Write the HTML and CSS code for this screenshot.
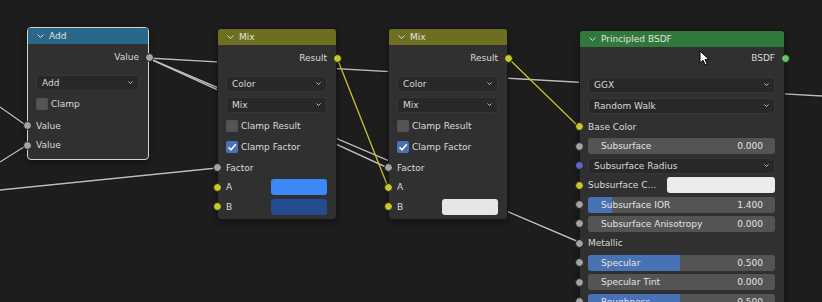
FILE: index.html
```html
<!DOCTYPE html>
<html lang="en">
<head>
  <meta charset="UTF-8">
  <title>Shader Editor</title>
  <link rel="stylesheet" href="styles.css">
</head>
<body>
  <div class="editor">

    <!-- noodles: drawn under the nodes -->
    <svg class="wires" width="822" height="302" viewBox="0 0 822 302">
      <defs>
        <path id="w1" d="M0 107 L27 126"/>
        <path id="w2" d="M0 162 L27 145"/>
        <path id="w3" d="M0 190 L217 168"/>
        <path id="w4" d="M148 58 L822 96"/>
        <path id="w5" d="M148 58 L579 242"/>
        <path id="w6" d="M148 58 L388 168"/>
        <path id="w7" d="M337 58 L388 187"/>
        <path id="w8" d="M508 58 L579 127"/>
      </defs>
      <g class="wire-shade">
        <use href="#w1"/><use href="#w2"/><use href="#w3"/><use href="#w4"/>
        <use href="#w5"/><use href="#w6"/><use href="#w7"/><use href="#w8"/>
      </g>
      <g class="wire-gray">
        <use href="#w1"/><use href="#w2"/><use href="#w3"/><use href="#w4"/>
        <use href="#w5"/><use href="#w6"/>
      </g>
      <g class="wire-yellow">
        <use href="#w7"/><use href="#w8"/>
      </g>
    </svg>

    <!-- Add (math) -->
    <div class="node node-add selected">
      <div class="node-header head-math">
        <svg class="chev" viewBox="0 0 7 4"><path d="M0.5 0.5 L3.5 3.5 L6.5 0.5"/></svg>
        <span>Add</span>
      </div>
      <div class="node-body body-add">
        <div class="row row-out"><span>Value</span><i class="socket gray"></i></div>
        <div class="row row-prop">
          <div class="menu"><span>Add</span><svg class="menu-chev" viewBox="0 0 5 3"><path d="M0.5 0.5 L2.5 2.5 L4.5 0.5"/></svg></div>
        </div>
        <div class="row row-prop"><span class="check"></span><span>Clamp</span></div>
        <div class="row row-sock sock-first"><i class="socket gray"></i><span>Value</span></div>
        <div class="row row-sock"><i class="socket gray"></i><span>Value</span></div>
      </div>
    </div>

    <!-- Mix 1 -->
    <div class="node node-mix1">
      <div class="node-header head-color">
        <svg class="chev" viewBox="0 0 7 4"><path d="M0.5 0.5 L3.5 3.5 L6.5 0.5"/></svg>
        <span>Mix</span>
      </div>
      <div class="node-body body-mix">
        <div class="row row-out"><span>Result</span><i class="socket yellow"></i></div>
        <div class="row row-prop">
          <div class="menu"><span>Color</span><svg class="menu-chev" viewBox="0 0 5 3"><path d="M0.5 0.5 L2.5 2.5 L4.5 0.5"/></svg></div>
        </div>
        <div class="row row-prop">
          <div class="menu"><span>Mix</span><svg class="menu-chev" viewBox="0 0 5 3"><path d="M0.5 0.5 L2.5 2.5 L4.5 0.5"/></svg></div>
        </div>
        <div class="row row-prop"><span class="check"></span><span>Clamp Result</span></div>
        <div class="row row-prop">
          <span class="check on"><svg viewBox="0 0 12 12"><path d="M2.5 6.3 L5 8.8 L9.8 3.2"/></svg></span><span>Clamp Factor</span>
        </div>
        <div class="row row-sock sock-first"><i class="socket gray"></i><span>Factor</span></div>
        <div class="row row-sock"><i class="socket yellow"></i><span>A</span><span class="swatch swatch-mix" style="background:#3b89f7"></span></div>
        <div class="row row-sock"><i class="socket yellow"></i><span>B</span><span class="swatch swatch-mix" style="background:#234d90"></span></div>
      </div>
    </div>

    <!-- Mix 2 -->
    <div class="node node-mix2">
      <div class="node-header head-color">
        <svg class="chev" viewBox="0 0 7 4"><path d="M0.5 0.5 L3.5 3.5 L6.5 0.5"/></svg>
        <span>Mix</span>
      </div>
      <div class="node-body body-mix">
        <div class="row row-out"><span>Result</span><i class="socket yellow"></i></div>
        <div class="row row-prop">
          <div class="menu"><span>Color</span><svg class="menu-chev" viewBox="0 0 5 3"><path d="M0.5 0.5 L2.5 2.5 L4.5 0.5"/></svg></div>
        </div>
        <div class="row row-prop">
          <div class="menu"><span>Mix</span><svg class="menu-chev" viewBox="0 0 5 3"><path d="M0.5 0.5 L2.5 2.5 L4.5 0.5"/></svg></div>
        </div>
        <div class="row row-prop"><span class="check"></span><span>Clamp Result</span></div>
        <div class="row row-prop">
          <span class="check on"><svg viewBox="0 0 12 12"><path d="M2.5 6.3 L5 8.8 L9.8 3.2"/></svg></span><span>Clamp Factor</span>
        </div>
        <div class="row row-sock sock-first"><i class="socket gray"></i><span>Factor</span></div>
        <div class="row row-sock"><i class="socket yellow"></i><span>A</span></div>
        <div class="row row-sock"><i class="socket yellow"></i><span>B</span><span class="swatch swatch-mix" style="background:#e6e6e6"></span></div>
      </div>
    </div>

    <!-- Principled BSDF -->
    <div class="node node-bsdf">
      <div class="node-header head-shader">
        <svg class="chev" viewBox="0 0 7 4"><path d="M0.5 0.5 L3.5 3.5 L6.5 0.5"/></svg>
        <span>Principled BSDF</span>
      </div>
      <div class="node-body body-bsdf">
        <div class="row row-out"><span>BSDF</span><i class="socket green"></i></div>
        <div class="row row-prop">
          <div class="menu"><span>GGX</span><svg class="menu-chev" viewBox="0 0 5 3"><path d="M0.5 0.5 L2.5 2.5 L4.5 0.5"/></svg></div>
        </div>
        <div class="row row-prop">
          <div class="menu"><span>Random Walk</span><svg class="menu-chev" viewBox="0 0 5 3"><path d="M0.5 0.5 L2.5 2.5 L4.5 0.5"/></svg></div>
        </div>
        <div class="row row-bsdf sock-first"><i class="socket yellow"></i><span>Base Color</span></div>
        <div class="row row-bsdf"><i class="socket gray"></i>
          <div class="slider"><span>Subsurface</span><span>0.000</span></div>
        </div>
        <div class="row row-bsdf"><i class="socket purple"></i>
          <div class="menu"><span>Subsurface Radius</span><svg class="menu-chev" viewBox="0 0 5 3"><path d="M0.5 0.5 L2.5 2.5 L4.5 0.5"/></svg></div>
        </div>
        <div class="row row-bsdf"><i class="socket yellow"></i><span>Subsurface C...</span><span class="swatch swatch-bsdf" style="background:#ececec"></span></div>
        <div class="row row-bsdf"><i class="socket gray"></i>
          <div class="slider" style="--fill:13%"><span>Subsurface IOR</span><span>1.400</span></div>
        </div>
        <div class="row row-bsdf"><i class="socket gray"></i>
          <div class="slider"><span>Subsurface Anisotropy</span><span>0.000</span></div>
        </div>
        <div class="row row-bsdf"><i class="socket gray"></i><span>Metallic</span></div>
        <div class="row row-bsdf"><i class="socket gray"></i>
          <div class="slider" style="--fill:49%"><span>Specular</span><span>0.500</span></div>
        </div>
        <div class="row row-bsdf"><i class="socket gray"></i>
          <div class="slider"><span>Specular Tint</span><span>0.000</span></div>
        </div>
        <div class="row row-bsdf"><i class="socket gray"></i>
          <div class="slider" style="--fill:49%"><span>Roughness</span><span>0.500</span></div>
        </div>
      </div>
    </div>

    <!-- mouse pointer -->
    <svg class="pointer" width="12" height="17" viewBox="0 0 12 17">
      <path d="M1 1 L1 13 L4 10.2 L6.2 15 L8.2 14.1 L6 9.4 L10 9.4 Z"/>
    </svg>
  </div>
</body>
</html>
```

FILE: styles.css
```css
* {
  box-sizing: border-box;
}

body {
  margin: 0;
  background: #1d1d1d;
  font-family: "DejaVu Sans", sans-serif;
  font-size: 9px;
  color: #dadada;
}

.editor {
  position: relative;
  width: 822px;
  height: 302px;
  overflow: hidden;
  background: #1d1d1d;
}

/* noodles */
.wires {
  position: absolute;
  left: 0;
  top: 0;
}
.wires use {
  fill: none;
}
.wire-shade {
  stroke: #0e0e0e;
  stroke-width: 3;
  stroke-opacity: 0.55;
  fill: none;
}
.wire-gray {
  stroke: #bdbdbd;
  stroke-width: 1.4;
  fill: none;
}
.wire-yellow {
  stroke: #c2c22c;
  stroke-width: 1.4;
  fill: none;
}

/* nodes sit on a free canvas */
.node {
  position: absolute;
  background: #303030;
  border: 1px solid #161616;
  border-radius: 4px;
  box-shadow: 0 2px 6px rgba(0, 0, 0, 0.45);
}
.node.selected {
  border-color: #d4d4d4;
}
.node-add {
  left: 27px;
  top: 27px;
  width: 122px;
}
.node-mix1 {
  left: 217px;
  top: 28px;
  width: 120px;
}
.node-mix2 {
  left: 388px;
  top: 28px;
  width: 120px;
}
.node-bsdf {
  left: 579px;
  top: 30px;
  width: 206px;
}

.node-header {
  height: 16px;
  display: flex;
  align-items: center;
  gap: 5px;
  padding-left: 9px;
  border-radius: 3px 3px 0 0;
  color: #e2e2e2;
}
.head-math {
  background: #2a6788;
}
.head-color {
  background: #6e6e21;
}
.head-shader {
  background: #30793a;
}
.chev {
  width: 7px;
  height: 4px;
  fill: none;
  stroke: #dcdcdc;
  stroke-width: 1;
}

.body-add {
  padding: 3px 0 4px;
}
.body-mix {
  padding: 3px 0 2px;
}
.body-bsdf {
  padding: 1px 0 0;
}

.row {
  position: relative;
  display: flex;
  align-items: center;
  padding: 0 9px 0 8px;
  white-space: nowrap;
}
.row-out {
  height: 20px;
  justify-content: flex-end;
  margin-bottom: 5px;
}
.body-bsdf .row-out {
  margin-bottom: 6px;
}
.row-prop {
  height: 21px;
}
.row-sock {
  height: 19.5px;
}
.body-add .sock-first {
  margin-top: 2px;
}
.body-mix .sock-first {
  margin-top: 1px;
}
.row-bsdf {
  height: 19.4px;
}
.body-bsdf .sock-first {
  margin-top: 1.3px;
}

.socket {
  position: absolute;
  left: -5.5px;
  top: 50%;
  width: 9px;
  height: 9px;
  margin-top: -4.5px;
  border-radius: 50%;
  border: 1px solid #1b1b1b;
}
.row-out .socket {
  left: auto;
  right: -5.5px;
}
.gray {
  background: #a3a3a3;
}
.yellow {
  background: #c7c729;
}
.purple {
  background: #6363c7;
}
.green {
  background: #63c763;
}

/* widgets */
.menu {
  flex: 1;
  height: 16px;
  display: flex;
  align-items: center;
  justify-content: space-between;
  padding: 0 5px 0 5px;
  background: #282828;
  border: 1px solid #363636;
  border-radius: 3px;
}
.menu-chev {
  width: 5px;
  height: 3px;
  fill: none;
  stroke: #cfcfcf;
  stroke-width: 0.9;
}

.slider {
  flex: 1;
  height: 16px;
  display: flex;
  align-items: center;
  justify-content: space-between;
  padding: 0 12px 0 13px;
  border-radius: 3px;
  background: linear-gradient(90deg, #4772b3 var(--fill, 0%), #545454 var(--fill, 0%));
  color: #e4e4e4;
}

.check {
  width: 12px;
  height: 12px;
  margin-right: 3px;
  border-radius: 2px;
  background: #545454;
  display: flex;
}
.check.on {
  background: #4772b3;
}
.check svg {
  width: 12px;
  height: 12px;
  fill: none;
  stroke: #ffffff;
  stroke-width: 1.5;
}

.swatch {
  height: 16px;
  margin-left: auto;
  border-radius: 3px;
}
.swatch-mix {
  width: 56px;
}
.swatch-bsdf {
  width: 108px;
}

.pointer {
  position: absolute;
  left: 699px;
  top: 50px;
}
.pointer path {
  fill: #ffffff;
  stroke: #000000;
  stroke-width: 1;
  stroke-linejoin: round;
}
```
